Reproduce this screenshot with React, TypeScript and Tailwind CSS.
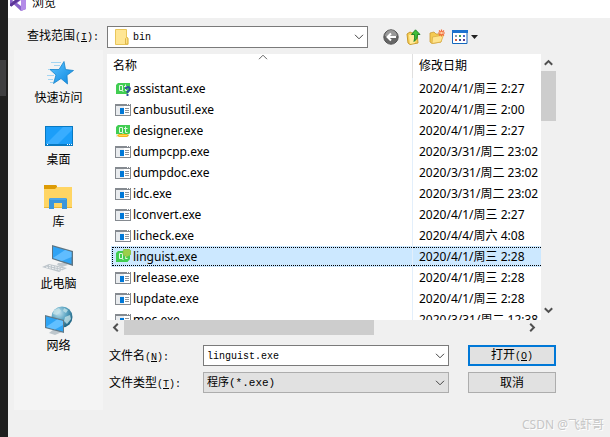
import React from 'react'

type IconKind = 'assistant' | 'designer' | 'linguist' | 'app'

interface FileEntry {
  name: string
  date: string
  icon: IconKind
}

const files: FileEntry[] = [
  { name: 'assistant.exe', date: '2020/4/1/周三 2:27', icon: 'assistant' },
  { name: 'canbusutil.exe', date: '2020/4/1/周三 2:00', icon: 'app' },
  { name: 'designer.exe', date: '2020/4/1/周三 2:27', icon: 'designer' },
  { name: 'dumpcpp.exe', date: '2020/3/31/周二 23:02', icon: 'app' },
  { name: 'dumpdoc.exe', date: '2020/3/31/周二 23:02', icon: 'app' },
  { name: 'idc.exe', date: '2020/3/31/周二 23:02', icon: 'app' },
  { name: 'lconvert.exe', date: '2020/4/1/周三 2:27', icon: 'app' },
  { name: 'licheck.exe', date: '2020/4/4/周六 4:08', icon: 'app' },
  { name: 'linguist.exe', date: '2020/4/1/周三 2:28', icon: 'linguist' },
  { name: 'lrelease.exe', date: '2020/4/1/周三 2:28', icon: 'app' },
  { name: 'lupdate.exe', date: '2020/4/1/周三 2:28', icon: 'app' },
  { name: 'moc.exe', date: '2020/3/31/周二 12:38', icon: 'app' },
]

const selectedFile = 'linguist.exe'

const Chevron: React.FC<{ className?: string }> = ({ className }) => (
  <svg className={className} width="10" height="6" viewBox="0 0 10 6" fill="none" stroke="currentColor">
    <path d="M1 .8 5 4.8 9 .8" />
  </svg>
)

const ScrollArrow: React.FC<{ className?: string }> = ({ className }) => (
  <svg className={className} width="9" height="7" viewBox="0 0 9 7" fill="none" stroke="#505050" strokeWidth="2">
    <path d="M.8 1.2 4.5 4.9 8.2 1.2" />
  </svg>
)

const VisualStudioIcon = () => (
  <svg width="17" height="16" viewBox="0 0 17 16" className="shrink-0">
    <path d="M11 0 16 2V14L11 16 4 9.500 1.500 11.500 0 10.800V5.200L1.500 4.500 4 6.500Z" fill="#8a63c9" />
    <path d="M11 0 16 2V14L11 16Z" fill="#b48be8" />
    <path d="M11 5 7 8 11 11ZM2 6.500V9.500L3.500 8Z" fill="#fff" />
    <path d="M0 10.800 1.500 11.500 11 4V0L0 9Z" fill="#5b3597" />
  </svg>
)

const FileIcon: React.FC<{ kind: IconKind }> = ({ kind }) => {
  if (kind === 'app') {
    return (
      <svg width="16" height="16" viewBox="0 0 16 16" className="shrink-0">
        <rect x=".5" y="2.500" width="15" height="11" fill="#fff" stroke="#858a90" />
        <path d="M0 2H16V4H0Z" fill="#858a90" />
        <path d="M12 2.500h1M14 2.500h1" stroke="#fff" />
        <path d="M1 4H15V13H1Z" fill="#e9ecef" />
        <path d="M9 4H15V13H9Z" fill="#fff" />
        <path d="M5 6H9V12H5Z" fill="#0078d7" />
        <path d="M10 6.500h4M10 8.500h4M10 10.500h4" stroke="#90959b" />
      </svg>
    )
  }
  return (
    <svg width="16" height="16" viewBox="0 0 16 16" className="shrink-0">
      <path d="M3 2H15V10L12.500 13H1V4Z" fill="#41cd52" />
      <path d="M4.500 4.500H7.500V9.500H4.500ZM7 9.500 8.500 11M10.500 3.500V9.500H12.500M9 5.500H12.500" fill="none" stroke="#e2f9e5" />
      {kind === 'assistant' && (
        <>
          <path d="M10.500 8Q11 6 13 6Q15.500 6.500 14.500 9L12.500 10.500V12" fill="none" stroke="#30509d" strokeWidth="2" />
          <path d="M11.500 13H13.500V15H11.500Z" fill="#30509d" />
        </>
      )}
      {kind === 'designer' && (
        <>
          <path d="M1 11H14L13 14H1Z" fill="#e8edde" />
          <path d="M4 11H12L14 12.500 12 14H4L2 12.500Z" fill="#f5b51b" />
          <path d="M4 12.500H12" stroke="#ffda53" />
        </>
      )}
      {kind === 'linguist' && (
        <path d="M9 0H14L16 2V5L14 7H13L11 9V7H9L8 5V2Z" fill="#9bcf4b" stroke="#7bbd43" strokeWidth=".6" />
      )}
    </svg>
  )
}

const FolderIcon = () => (
  <svg width="14" height="16" viewBox="0 0 14 16" className="pointer-events-none col-start-1 row-start-1 ml-2">
    <path d="M.5.500H11.500V8L13 9V15.500H.5Z" fill="#ffe694" stroke="#e9c65b" />
    <path d="M10.500 15V9.500L11.500 8.500 12.800 9.500V15Z" fill="#ffe187" stroke="#deb84a" />
  </svg>
)

const QuickAccessIcon = () => (
  <svg width="32" height="32" viewBox="0 0 32 32">
    <defs>
      <linearGradient id="star" x1="0" y1="0" x2="1" y2="1">
        <stop offset="0" stopColor="#5cc4ff" />
        <stop offset="1" stopColor="#0b86e0" />
      </linearGradient>
    </defs>
    <path d="M9 4.500H19M12 7.500H18M6 11.500H12M5 17.500H12M6 21.500H11M8 24.500H11" stroke="#a3d5f2" />
    <path d="M22 3.500 23.500 11.500 31.500 12.500 25 17.300 25.500 26 19 20.500 11.500 25.500 14 17 8 11.500 17 11.500Z" fill="url(#star)" stroke="#1784cc" strokeWidth=".8" />
  </svg>
)

const DesktopIcon = () => (
  <svg width="32" height="32" viewBox="0 0 32 32">
    <path d="M2 6H30V26H2Z" fill="#0879c2" />
    <path d="M3 7H29V24H3Z" fill="#1b9ef9" />
    <path d="M3 24 20 7H29V10L15 24Z" fill="#38adff" />
    <path d="M4 24.500h1M24 24.500h1M26 24.500h1M28 24.500h1" stroke="#fff" />
  </svg>
)

const LibraryIcon = () => (
  <svg width="32" height="32" viewBox="0 0 32 32">
    <path d="M1 3H13L14 4V9H1Z" fill="#dd9b05" />
    <path d="M1 7H12L14 5H29V26H1Z" fill="#ffd563" />
    <path d="M1 25H29V26H1Z" fill="#e9b83a" />
    <path d="M6 27V17L7 16H23L24 17V27H19V21H11V27Z" fill="#3b96db" />
    <path d="M7 17H23" stroke="#61b5f2" />
  </svg>
)

const ComputerIcon = () => (
  <svg width="32" height="32" viewBox="0 0 32 32">
    <path d="M16 19H23L26 21 20 23 15 21Z" fill="#c0c8ce" />
    <path d="M10 1 31 7V22L10 15Z" fill="#5e7583" />
    <path d="M11 2.500 29.500 8V20L11 14Z" fill="#2fa3f5" />
    <path d="M11 14 23 6 29.500 8V13L20 17Z" fill="#60bdff" />
    <path d="M0 23 7 20 25 24 17 28Z" fill="#bdc5cb" />
    <path d="M4 23 20 26.500M7 21.500 22 25" stroke="#f3f5f6" strokeDasharray="2 1" />
  </svg>
)

const NetworkIcon = () => (
  <svg width="32" height="32" viewBox="0 0 32 32">
    <defs>
      <radialGradient id="globe" cx=".35" cy=".3" r=".75">
        <stop offset="0" stopColor="#c3e2ee" />
        <stop offset=".5" stopColor="#5ba5c3" />
        <stop offset="1" stopColor="#1c607f" />
      </radialGradient>
    </defs>
    <circle cx="19" cy="11" r="10.500" fill="url(#globe)" />
    <path d="M11 4 16 2 18 5 14 9 10 8ZM21 2 25 4 23 7 20 5ZM22 11 27 9 28 13 24 18 21 15Z" fill="#cae6e9" opacity=".75" />
    <path d="M11 23H16L19 26 12 29 6 27Z" fill="#bec7cd" />
    <path d="M2 9 21 14V27L2 22Z" fill="#617987" />
    <path d="M3 10.500 20 15V25.500L3 21Z" fill="#2da4f5" />
    <path d="M3 21 14 13.500 20 15V19L12 23.500Z" fill="#62c0ff" />
  </svg>
)

const places = [
  { label: '快速访问', Icon: QuickAccessIcon },
  { label: '桌面', Icon: DesktopIcon },
  { label: '库', Icon: LibraryIcon },
  { label: '此电脑', Icon: ComputerIcon },
  { label: '网络', Icon: NetworkIcon },
]

const Toolbar = () => (
  <div className="flex h-[22px] w-[188px] shrink-0 items-center gap-[7px] pl-[15px]">
    <button type="button" aria-label="后退">
      <svg width="16" height="16" viewBox="0 0 16 16">
        <circle cx="8" cy="8" r="7.200" fill="#666" stroke="#555" />
        <path d="M2 7A6 6 0 0 1 14 7Q8 9 2 7" fill="#999" />
        <path d="M13 8H5M8 4.500 4.500 8 8 11.500" fill="none" stroke="#fff" strokeWidth="2" />
      </svg>
    </button>
    <button type="button" aria-label="向上一级">
      <svg width="16" height="16" viewBox="0 0 16 16">
        <path d="M1 5 4 3 6 4H11L12 14 4 15.500 2 14Z" fill="#f6cf58" stroke="#c99a2e" />
        <path d="M3 6 10 5 9 14 4 15Z" fill="#ffeb9c" />
        <path d="M9.500 .8 14 5.500H11.500Q12 10 8 12.500 9 9 8.500 5.500H5.500Z" fill="#40bf38" stroke="#187d21" strokeWidth=".9" />
      </svg>
    </button>
    <button type="button" aria-label="新建文件夹">
      <svg width="16" height="16" viewBox="0 0 16 16">
        <path d="M1 4 5 3 7 5H12L12 13 3 14.500 1 13Z" fill="#f5ca52" stroke="#c99a36" strokeWidth=".8" />
        <path d="M3.500 8 14.500 6 12 13 3 14.500Z" fill="#ffe48d" stroke="#d9ad45" strokeWidth=".8" />
        <path d="M12.500 .500V7.500M9 4H16M10 1.500 15 6.500M15 1.500 10 6.500" stroke="#f26a36" strokeWidth="1.200" />
        <circle cx="12.500" cy="4" r="1.300" fill="#ffd2a5" />
      </svg>
    </button>
    <button type="button" aria-label="查看菜单" className="flex items-center gap-[3px]">
      <svg width="16" height="16" viewBox="0 0 16 16">
        <path d="M.500 1.500H15V14.500H.500Z" fill="#fff" stroke="#1467bd" />
        <path d="M0 1H16V4H0Z" fill="#1c72cf" />
        <path d="M3 6h2v2H3Z" fill="#8499b5" />
        <path d="M7 6h2v2H7Z" fill="#42a354" />
        <path d="M11 6h2v2h-2Z" fill="#4969c6" />
        <path d="M3 10h2v2H3Z" fill="#d45f42" />
        <path d="M7 10h2v2H7Z" fill="#31539d" />
        <path d="M11 10h2v2h-2Z" fill="#5c3b8e" />
      </svg>
      <svg width="7" height="4" viewBox="0 0 7 4">
        <path d="M0 0H7L3.500 4Z" fill="#222" />
      </svg>
    </button>
  </div>
)

const FileTable = () => (
  <div className="h-[266px] min-w-0 flex-1 overflow-hidden bg-white pl-1">
    <table className="w-full table-fixed border-separate border-spacing-0 text-left text-xs leading-4">
      <thead>
        <tr className="h-6">
          <th className="relative p-0 pl-[2px] font-normal">
            名称
            <Chevron className="absolute top-0 left-1/2 -ml-1 rotate-180 text-[#666]" />
          </th>
          <th className="w-[129px] border-l border-[#e0e0e0] p-0 pl-[6px] font-normal">修改日期</th>
        </tr>
      </thead>
      <tbody>
        {files.map((file) => {
          const selected = file.name === selectedFile
          return (
            <tr key={file.name} className={selected ? 'h-[21px] bg-[#cce8ff]' : 'h-[21px]'}>
              <td className="h-[21px] p-0">
                <div
                  className={
                    selected
                      ? 'ml-px flex h-[19px] items-center gap-[2px] border-y border-l border-dotted border-black pl-[2px]'
                      : 'flex h-[19px] items-center gap-[2px] pl-1'
                  }
                >
                  <FileIcon kind={file.icon} />
                  {file.name}
                </div>
              </td>
              <td className="h-[21px] overflow-hidden border-l border-[#e3effb] p-0">
                <div
                  className={
                    selected
                      ? 'flex h-[19px] items-center border-y border-dotted border-black pl-[6px] whitespace-nowrap'
                      : 'flex h-[19px] items-center pl-[6px] whitespace-nowrap'
                  }
                >
                  {file.date}
                </div>
              </td>
            </tr>
          )
        })}
      </tbody>
    </table>
  </div>
)

export default function App() {
  return (
    <div className="relative flex min-h-screen overflow-hidden bg-[#f0f0f0] font-['Noto_Sans','Noto_Sans_CJK_SC',sans-serif] text-xs text-black">
      <div className="w-2 shrink-0 bg-[#1f1f1f] pt-[60px]">
        <div className="h-9 w-[6px] bg-[#3e3e40]" />
      </div>

      <div className="min-w-0 flex-1">
        <header className="flex h-[18px] items-center gap-[5px] overflow-hidden bg-white pb-3 pl-[2px]">
          <VisualStudioIcon />
          <h1>浏览</h1>
        </header>

        <div className="flex h-8 items-start pt-2 pr-[54px] pl-[19px]">
          <label htmlFor="look-in" className="w-20 shrink-0 leading-5">
            查找范围
            <span className="font-['Liberation_Mono',monospace] text-[10px]">
              (<u>I</u>):
            </span>
          </label>
          <div className="grid min-w-0 flex-1 items-center">
            <select
              id="look-in"
              className="col-start-1 row-start-1 h-[22px] w-full appearance-none border border-[#7a7a7a] bg-white pt-[2px] pl-[25px] font-['Liberation_Mono',monospace] text-[10px]"
            >
              <option>bin</option>
            </select>
            <FolderIcon />
            <Chevron className="pointer-events-none col-start-1 row-start-1 mr-1 justify-self-end text-[#444]" />
          </div>
          <Toolbar />
        </div>

        <div className="flex items-start gap-1 pr-[54px] pl-[6px]">
          <nav className="flex h-[360px] w-[89px] shrink-0 flex-col items-center gap-[14px] bg-[#f4f4f4] pt-2">
            {places.map(({ label, Icon }) => (
              <button key={label} type="button" className="flex flex-col items-center leading-4">
                <Icon />
                {label}
              </button>
            ))}
          </nav>

          <main className="min-w-0 flex-1 pt-1">
            <div className="flex">
              <FileTable />
              <div className="flex w-[15px] shrink-0 flex-col items-center justify-between pb-[6px]">
                <div className="flex w-full flex-col items-center">
                  <div className="flex h-[17px] items-center">
                    <ScrollArrow className="rotate-180" />
                  </div>
                  <div className="h-[50px] w-full bg-[#cdcdcd]" />
                </div>
                <ScrollArrow />
              </div>
            </div>
            <div className="mr-[15px] flex h-[15px] items-center">
              <div className="flex w-[17px] shrink-0 justify-center">
                <ScrollArrow className="rotate-90" />
              </div>
              <div className="min-w-0 flex-1">
                <div className="h-[15px] w-5/8 bg-[#cdcdcd]" />
              </div>
              <div className="flex w-[17px] shrink-0 justify-center">
                <ScrollArrow className="-rotate-90" />
              </div>
            </div>

            <form className="mt-[10px] flex flex-col gap-[6px]" onSubmit={(e) => e.preventDefault()}>
              <div className="flex items-center">
                <label htmlFor="file-name" className="w-24 shrink-0 pt-[2px] pl-[2px]">
                  文件名
                  <span className="font-['Liberation_Mono',monospace] text-[10px]">
                    (<u>N</u>):
                  </span>
                </label>
                <div className="grid min-w-0 flex-1 items-center">
                  <input
                    id="file-name"
                    type="text"
                    defaultValue={selectedFile}
                    className="col-start-1 row-start-1 h-[21px] w-full border border-[#7a7a7a] bg-white pt-[2px] pl-[3px] font-['Liberation_Mono',monospace] text-[10px]"
                  />
                  <Chevron className="pointer-events-none col-start-1 row-start-1 mr-1 justify-self-end text-[#444]" />
                </div>
                <button
                  type="submit"
                  className="ml-[19px] h-[21px] w-[88px] shrink-0 border-2 border-[#0078d7] bg-[#e1e1e1] leading-4"
                >
                  打开
                  <span className="font-['Liberation_Mono',monospace] text-[10px]">
                    (<u>O</u>)
                  </span>
                </button>
              </div>
              <div className="flex items-center">
                <label htmlFor="file-type" className="w-24 shrink-0 pt-[2px] pl-[2px]">
                  文件类型
                  <span className="font-['Liberation_Mono',monospace] text-[10px]">
                    (<u>T</u>):
                  </span>
                </label>
                <div className="grid min-w-0 flex-1 items-center">
                  <select
                    id="file-type"
                    className="col-start-1 row-start-1 h-[21px] w-full appearance-none border border-[#adadad] bg-[#e1e1e1] pt-[2px] pl-[3px] font-['Liberation_Mono','Noto_Sans_CJK_SC',monospace] text-[11px]"
                  >
                    <option>程序(*.exe)</option>
                  </select>
                  <Chevron className="pointer-events-none col-start-1 row-start-1 mr-1 justify-self-end text-[#444]" />
                </div>
                <button
                  type="button"
                  className="ml-[19px] h-[21px] w-[88px] shrink-0 border border-[#adadad] bg-[#e1e1e1] leading-4"
                >
                  取消
                </button>
              </div>
            </form>
          </main>
        </div>
      </div>

      <p className="absolute right-[6px] bottom-1 text-xs leading-4 text-[#c6c6c6] [text-shadow:1px_1px_0_#fff]">
        CSDN @飞虾哥
      </p>
    </div>
  )
}
